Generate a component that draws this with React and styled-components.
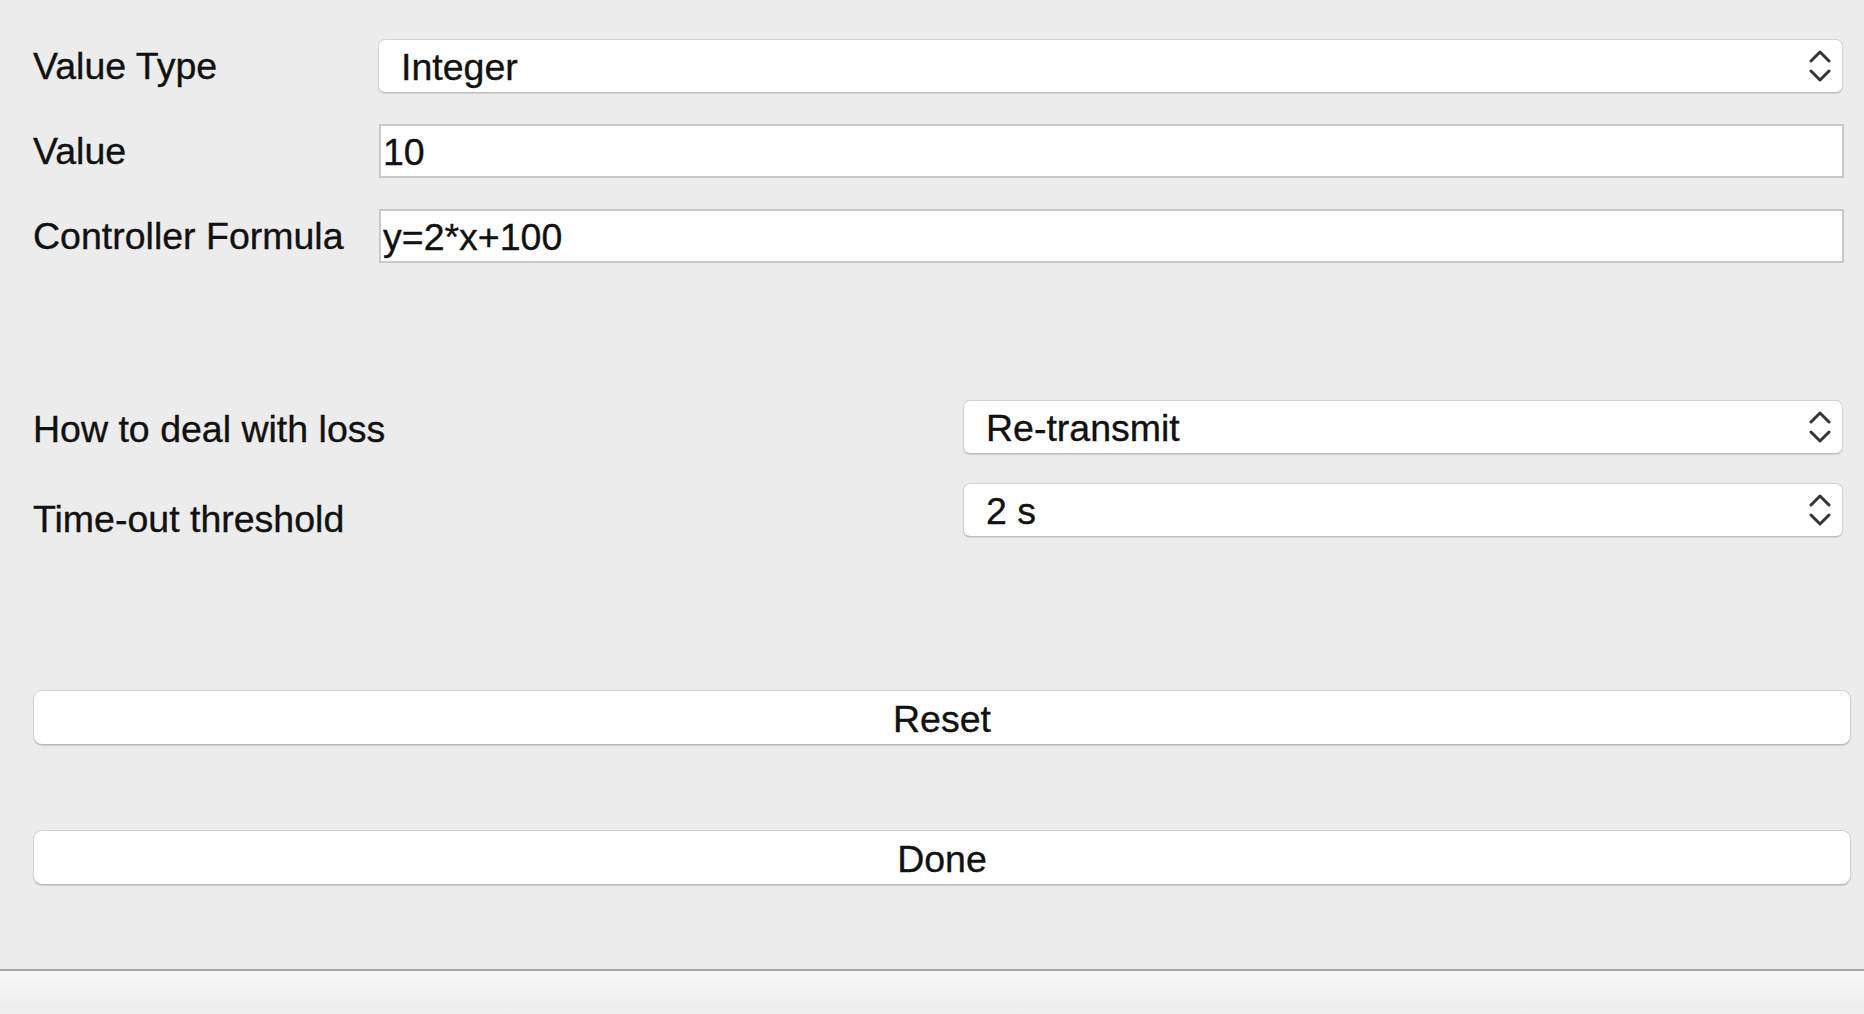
import styled, { createGlobalStyle } from 'styled-components';

const GlobalStyle = createGlobalStyle`
  html, body {
    margin: 0;
    padding: 0;
    background: #ececec;
  }
  * {
    box-sizing: border-box;
  }
`;

function Chevrons() {
  return (
    <ChevronIcon width="22" height="36" viewBox="0 0 22 36">
      <polyline points="2,13 11,4 20,13" />
      <polyline points="2,23 11,32 20,23" />
    </ChevronIcon>
  );
}

function Select({ value }) {
  return (
    <SelectBox>
      <SelectValue>{value}</SelectValue>
      <Chevrons />
    </SelectBox>
  );
}

export default function App() {
  return (
    <>
      <GlobalStyle />
      <Window>
        <Content>
          <Form $labelWidth={345} $gap={31}>
            <Label>Value Type</Label>
            <Select value="Integer" />
            <Label>Value</Label>
            <TextInput defaultValue="10" />
            <Label>Controller Formula</Label>
            <TextInput defaultValue="y=2*x+100" />
          </Form>

          <Form $labelWidth={930} $gap={29} $top={137}>
            <Label $shift={2}>How to deal with loss</Label>
            <Select value="Re-transmit" />
            <Label $shift={9}>Time-out threshold</Label>
            <Select value="2 s" />
          </Form>

          <Buttons>
            <PushButton>Reset</PushButton>
            <PushButton>Done</PushButton>
          </Buttons>
        </Content>
        <StatusBar />
      </Window>
    </>
  );
}

const Window = styled.div`
  width: 1864px;
  height: 1014px;
  display: flex;
  flex-direction: column;
  background: #ececec;
  font-family: "Liberation Sans", Arial, sans-serif;
  color: #111111;
  -webkit-text-stroke: 0.35px #111111;
`;

const Content = styled.div`
  flex: 1;
  padding: 39px 13px 0 33px;
`;

const Form = styled.div`
  display: grid;
  grid-template-columns: ${(p) => p.$labelWidth}px 1fr;
  row-gap: ${(p) => p.$gap}px;
  align-items: center;
  margin-top: ${(p) => p.$top || 0}px;
  margin-right: 8px;
`;

const Label = styled.div`
  font-size: 37.5px;
  line-height: 54px;
  white-space: nowrap;
  transform: translateY(${(p) => p.$shift || 0}px);
`;

const SelectBox = styled.div`
  height: 54px;
  display: flex;
  align-items: center;
  justify-content: space-between;
  padding: 2px 11px 0 22px;
  background: #ffffff;
  border: 1px solid #d2d2d2;
  border-bottom-color: #bdbdbd;
  border-radius: 7px;
  box-shadow: 0 1px 1px rgba(0, 0, 0, 0.12);
`;

const SelectValue = styled.span`
  font-size: 37.5px;
`;

const ChevronIcon = styled.svg`
  flex-shrink: 0;
  margin-top: -2px;
  fill: none;
  stroke: #353535;
  stroke-width: 3;
  stroke-linecap: round;
  stroke-linejoin: round;
`;

const TextInput = styled.input`
  height: 54px;
  width: 100%;
  padding: 3px 2px 0;
  margin-left: 1px;
  font-family: "Liberation Sans", Arial, sans-serif;
  font-size: 37.5px;
  color: #111111;
  -webkit-text-stroke: 0.35px #111111;
  background: #ffffff;
  border: 2px solid #c9c9c9;
  border-radius: 0;
  outline: none;
`;

const Buttons = styled.div`
  display: flex;
  flex-direction: column;
  gap: 85px;
  margin-top: 153px;
`;

const PushButton = styled.button`
  height: 55px;
  width: 100%;
  padding: 3px 0 0;
  font-family: "Liberation Sans", Arial, sans-serif;
  font-size: 37.5px;
  color: #111111;
  -webkit-text-stroke: 0.35px #111111;
  background: #ffffff;
  border: 1px solid #d0d0d0;
  border-bottom-color: #b8b8b8;
  border-radius: 9px;
  box-shadow: 0 1px 1px rgba(0, 0, 0, 0.14);
`;

const StatusBar = styled.div`
  height: 45px;
  border-top: 2px solid #a9a9a9;
  background: linear-gradient(#f7f7f7, #ededed);
`;
